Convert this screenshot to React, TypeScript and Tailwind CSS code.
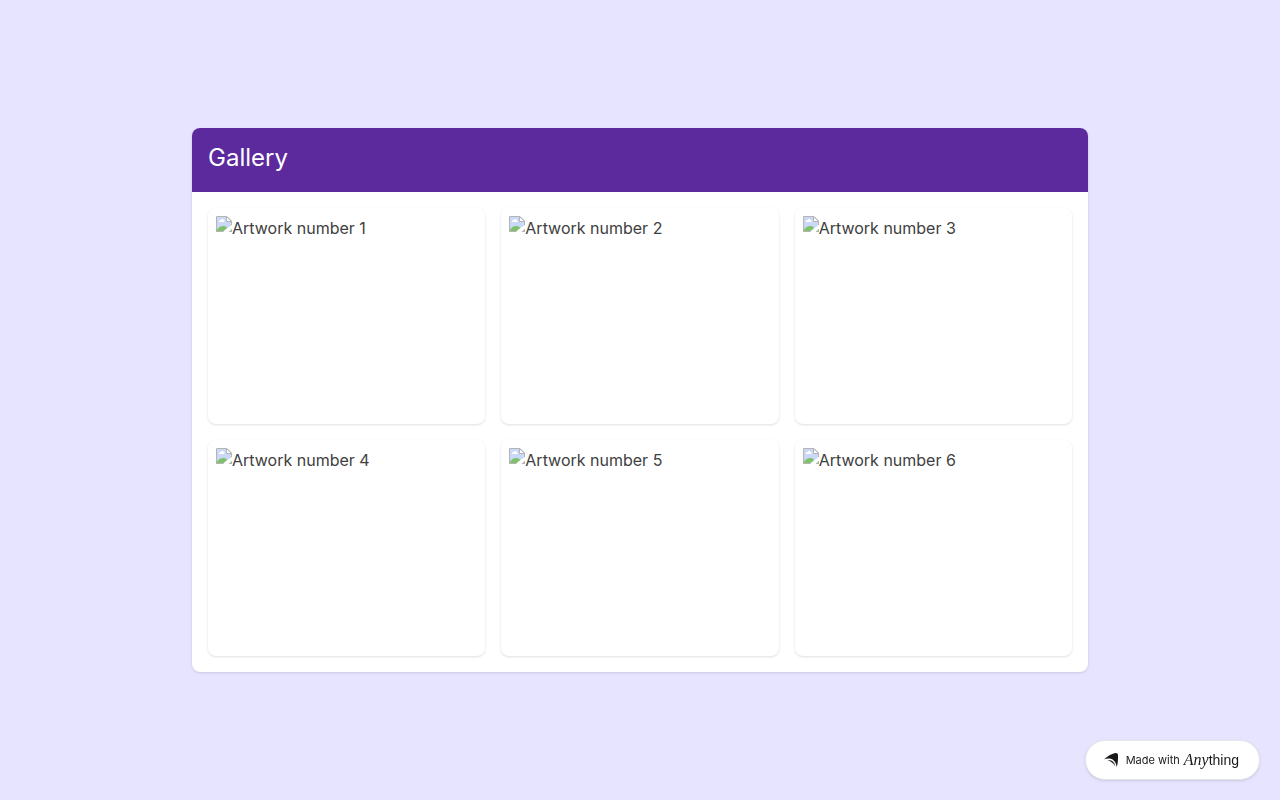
const artworks = [1, 2, 3, 4, 5, 6];

function PictureIcon() {
  return (
    <svg className="h-4 w-4 shrink-0" viewBox="0 0 16 16" aria-hidden="true">
      <path d="M0 0H11L16 5V16H0Z" fill="#fff" />
      <path d="M1 1H11V5H15V9.5L8 15H1Z" fill="#c9d9f7" />
      <path d="M3 6C2.4 4.7 4 4 4.6 4.4C5 2.6 7.5 2.6 7.8 4.3C9 4.3 9 6 8 6Z" fill="#fff" />
      <path d="M1 15V13.5C3 11 5 10 7 10C9 10 10.2 10.5 11.2 12L7.5 15Z" fill="#80c16c" />
      <path d="M0.5 16V0.5H11L15.5 5V9.5" fill="none" stroke="#b4b4b4" />
      <path d="M10.5 0.5V5.5H15.5Z" fill="#fff" stroke="#b4b4b4" />
      <path d="M0 15.5H8M13 15.5H16M15.5 13V16" fill="none" stroke="#b4b4b4" />
      <path d="M16 9V12L11.5 16H7Z" fill="#fff" />
      <path d="M15 13.5V15H13.5Z" fill="#a6cf9a" />
    </svg>
  );
}

function ArtworkCard({ number }: { number: number }) {
  return (
    <figure className="rounded-lg bg-white p-2 shadow-sm">
      <div className="flex h-[200px] items-start text-base text-[#404040]">
        <PictureIcon />
        <figcaption>Artwork number {number}</figcaption>
      </div>
    </figure>
  );
}

function MadeWithBadge() {
  return (
    <a
      href="#"
      className="fixed right-5 bottom-5 flex h-10 items-center rounded-full border border-[#e5e5ea] bg-white pr-5 pl-[18px] text-[#18191b] shadow-sm"
    >
      <svg className="h-4 w-4" viewBox="0 0 16 16" fill="currentColor" aria-hidden="true">
        <path d="M0 7.3C3.6 4.4 7.2 1.8 11.2 1C12.9 .7 14 1.6 14 3.3C14.2 7.7 13.8 11.5 12.7 15.3C12.4 10.7 9.6 6.8 5.2 6.6C3.4 6.5 1.7 6.8 0 7.3Z" />
        <path d="M3.5 8.1C7.6 7.4 10.8 10.4 11.2 14.2C9.4 11.2 6.9 9.3 3.5 8.1Z" />
      </svg>
      <span className="ml-[6px] text-[11px]">Made with</span>
      <span className="ml-1 flex items-baseline leading-5">
        <span className="font-['Liberation_Serif',serif] text-[16px] italic">Any</span>
        <span className="font-['Liberation_Sans',sans-serif] text-[14px]">thing</span>
      </span>
    </a>
  );
}

export default function App() {
  return (
    <div className="flex min-h-screen items-center justify-center bg-[#e6e4ff] font-['Inter',sans-serif]">
      <main className="w-[70%] rounded-lg bg-white shadow-sm">
        <header className="rounded-t-lg bg-[#5c2a9d] px-4 pt-4 pb-5">
          <h1 className="text-2xl leading-7 text-white">Gallery</h1>
        </header>
        <section className="grid grid-cols-3 gap-4 p-4">
          {artworks.map((number) => (
            <ArtworkCard key={number} number={number} />
          ))}
        </section>
      </main>
      <MadeWithBadge />
    </div>
  );
}
